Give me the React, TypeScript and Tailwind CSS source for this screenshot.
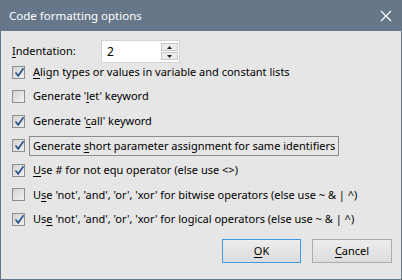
import React from "react";

const font = { fontFamily: '"Noto Sans", "Segoe UI", sans-serif' };

function U({ children }: { children: React.ReactNode }) {
  return <span className="underline decoration-1 underline-offset-[2px]">{children}</span>;
}

function CheckBox({ checked }: { checked: boolean }) {
  return (
    <div className="relative w-[13px] h-[13px] shrink-0 border border-[#8e8f8f] bg-[linear-gradient(135deg,#d2d2d2,#f2f2f2)]">
      {checked && (
        <svg className="absolute left-[1px] top-[0px]" width="11" height="11" viewBox="0 0 11 11">
          <path d="M1.5 5.5 L4.2 8.8 L9.5 1.2" fill="none" stroke="#23518c" strokeWidth="1.6" />
        </svg>
      )}
    </div>
  );
}

function Row({ checked, children, focus }: { checked: boolean; children: React.ReactNode; focus?: boolean }) {
  return (
    <div className="flex items-center h-[18px]">
      <CheckBox checked={checked} />
      {focus ? (
        <div className="ml-[4px] h-[20px] px-[3px] flex items-center border border-[#8c8c8c] whitespace-nowrap">
          <span>{children}</span>
        </div>
      ) : (
        <span className="ml-[8px] whitespace-nowrap">{children}</span>
      )}
    </div>
  );
}

export default function App() {
  return (
    <div className="w-[402px] h-[280px] flex flex-col bg-[#67778a] text-[11px] text-black" style={font}>
      <div className="h-[31px] shrink-0 flex items-center justify-between pl-[9px] pr-[10px] text-white text-[11.5px]">
        <span>Code formatting options</span>
        <svg width="12" height="12" viewBox="0 0 12 12">
          <path d="M1 1 L11 11 M11 1 L1 11" stroke="white" strokeWidth="1.2" />
        </svg>
      </div>
      <div className="flex-1 mx-[1px] mb-[1px] bg-[#e6e6e6] flex flex-col pl-[11px] pt-[9px]">
        <div className="flex items-center h-[23px]">
          <span className="w-[89px]">
            <U>I</U>ndentation:
          </span>
          <div className="relative w-[79px] h-[23px] bg-white border border-[#d3d3d3] flex items-center pl-[5px]">
            <span className="text-[12px]">2</span>
            <div className="absolute right-[1px] top-[2px] w-[17px] flex flex-col gap-[1px]">
              <div className="h-[8px] border border-[#c8c8c8] bg-[#ececec] flex items-center justify-center">
                <svg width="5" height="3" viewBox="0 0 5 3"><path d="M2.5 0 L5 3 L0 3 Z" fill="#222" /></svg>
              </div>
              <div className="h-[8px] border border-[#c8c8c8] bg-[#ececec] flex items-center justify-center">
                <svg width="5" height="3" viewBox="0 0 5 3"><path d="M0 0 L5 0 L2.5 3 Z" fill="#222" /></svg>
              </div>
            </div>
          </div>
        </div>
        <div className="flex flex-col gap-[6.6px]">
          <Row checked>
            <U>A</U>lign types or values in variable and constant lists
          </Row>
          <Row checked={false}>
            Generate '<U>l</U>et' keyword
          </Row>
          <Row checked>
            Generate '<U>c</U>all' keyword
          </Row>
          <Row checked focus>
            Generate <U>s</U>hort parameter assignment for same identifiers
          </Row>
          <Row checked>
            <U>U</U>se # for not equ operator (else use &lt;&gt;)
          </Row>
          <Row checked={false}>
            U<U>s</U>e 'not', 'and', 'or', 'xor' for bitwise operators (else use ~ &amp; | ^)
          </Row>
          <Row checked>
            Us<U>e</U> 'not', 'and', 'or', 'xor' for logical operators (else use ~ &amp; | ^)
          </Row>
        </div>
        <div className="flex justify-end gap-[11px] pr-[9px] mt-[10.4px]">
          <button className="w-[79px] h-[24px] border border-[#3c9ae8] bg-[linear-gradient(#ededed,#dcdcdc)] flex items-center justify-center">
            <span><U>O</U>K</span>
          </button>
          <button className="w-[80px] h-[24px] border border-[#acacac] bg-[linear-gradient(#ededed,#dcdcdc)] flex items-center justify-center">
            <span><U>C</U>ancel</span>
          </button>
        </div>
      </div>
    </div>
  );
}
